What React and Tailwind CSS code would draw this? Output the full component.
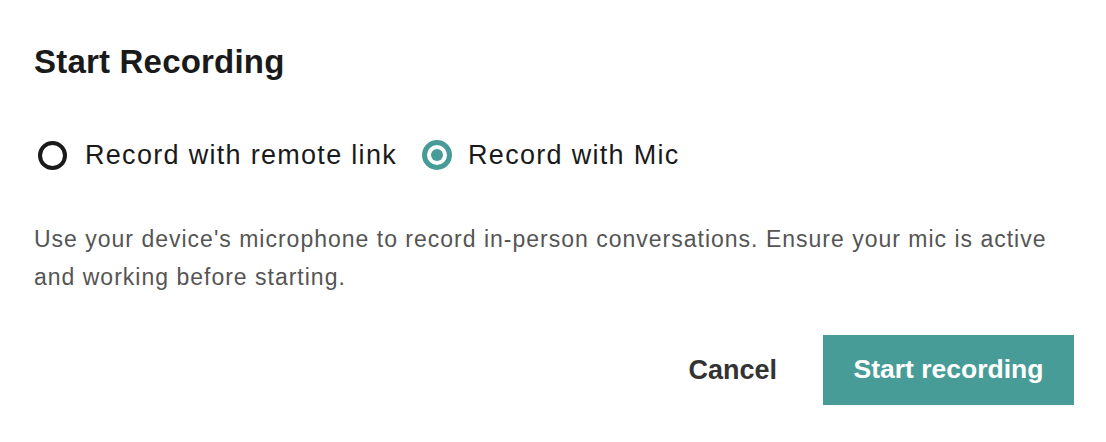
import { useState } from 'react'

const OPTIONS = [
  { id: 'remote', label: 'Record with remote link' },
  { id: 'mic', label: 'Record with Mic' },
]

function Radio({ checked, label, onSelect }) {
  return (
    <button type="button" onClick={onSelect} className="flex h-[30px] items-center">
      {checked ? (
        <span className="mr-[16px] flex h-[30px] w-[30px] items-center justify-center rounded-full border-[5px] border-[#479c98]">
          <span className="h-[12px] w-[12px] rounded-full bg-[#479c98]" />
        </span>
      ) : (
        <span className="mr-[18px] h-[29px] w-[29px] rounded-full border-[4px] border-[#1a1a1a]" />
      )}
      <span className="text-[27px] leading-[30px] tracking-[1.3px] text-[#1a1a1a]">{label}</span>
    </button>
  )
}

export default function App() {
  const [mode, setMode] = useState('mic')

  return (
    <div className="h-[442px] w-[1106px] bg-white pl-[34px] pr-[32px] pt-[42px] font-['Liberation_Sans',Arial,sans-serif]">
      <h2 className="text-[33px] font-bold leading-[40px] tracking-[0.2px] text-[#1a1a1a]">Start Recording</h2>

      <div className="mt-[58px] flex items-center gap-[25px] pl-[4px]">
        {OPTIONS.map((o) => (
          <Radio key={o.id} label={o.label} checked={mode === o.id} onSelect={() => setMode(o.id)} />
        ))}
      </div>

      <p className="mt-[50px] text-[23px] leading-[38px] tracking-[1px] text-[#555]">
        Use your device's microphone to record in-person conversations. Ensure your mic is active and working before starting.
      </p>

      <div className="mt-[39px] flex items-center justify-end gap-[46px]">
        <button type="button" className="text-[27px] font-bold text-[#333]">Cancel</button>
        <button type="button" className="h-[70px] w-[251px] bg-[#479c98] text-[26.5px] font-bold text-white">
          Start recording
        </button>
      </div>
    </div>
  )
}
